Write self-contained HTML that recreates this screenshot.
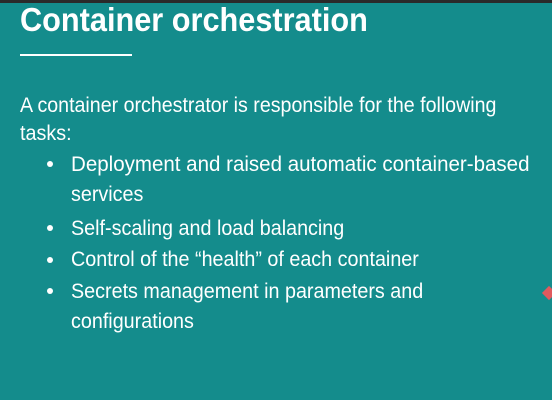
<!DOCTYPE html>
<html><head><style>
html,body{margin:0;padding:0}
body{width:552px;height:400px;background:#148c8c;position:relative;overflow:hidden;font-family:"Liberation Sans",sans-serif;color:#fff}
.top{position:absolute;left:0;top:0;width:552px;height:3px;background:#2a2a2a}
.t{position:absolute;left:20px;top:1px;font-weight:bold;font-size:33px;white-space:nowrap;transform-origin:0 0;transform:scaleX(0.93)}
.rule{position:absolute;left:20px;top:54px;width:112px;height:2px;background:#fff}
.l{position:absolute;white-space:nowrap;font-size:21px;transform-origin:0 0;transform:scaleX(0.94);line-height:24px}
.b{position:absolute;left:47px;width:6px;height:6px;border-radius:50%;background:#fff}
.d{position:absolute;left:544px;top:288px;width:10px;height:10px;background:#e05a5e;transform:rotate(45deg)}
</style></head><body>
<div class="top"></div>
<div class="t">Container orchestration</div>
<div class="rule"></div>
<div class="l" style="left:20px;top:94px;transform:scaleX(0.934)">A container orchestrator is responsible for the following</div>
<div class="l" style="left:20px;top:122px">tasks:</div>
<div class="b" style="top:161px"></div>
<div class="l" style="left:71px;top:153px;transform:scaleX(0.977)">Deployment and raised automatic container-based</div>
<div class="l" style="left:71px;top:183px">services</div>
<div class="b" style="top:225px"></div>
<div class="l" style="left:71px;top:217px">Self-scaling and load balancing</div>
<div class="b" style="top:257px"></div>
<div class="l" style="left:71px;top:248px">Control of the “health” of each container</div>
<div class="b" style="top:288px"></div>
<div class="l" style="left:71px;top:280px">Secrets management in parameters and</div>
<div class="l" style="left:71px;top:310px">configurations</div>
<div class="d"></div>
</body></html>
